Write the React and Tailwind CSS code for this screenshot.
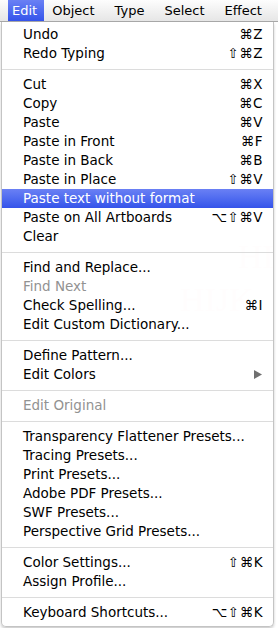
import React from "react";

const groups = [
  [
    { label: "Undo", keys: "⌘Z" },
    { label: "Redo Typing", keys: "⇧⌘Z" },
  ],
  [
    { label: "Cut", keys: "⌘X" },
    { label: "Copy", keys: "⌘C" },
    { label: "Paste", keys: "⌘V" },
    { label: "Paste in Front", keys: "⌘F" },
    { label: "Paste in Back", keys: "⌘B" },
    { label: "Paste in Place", keys: "⇧⌘V" },
    { label: "Paste text without format", active: true },
    { label: "Paste on All Artboards", keys: "⌥⇧⌘V" },
    { label: "Clear" },
  ],
  [
    { label: "Find and Replace..." },
    { label: "Find Next", disabled: true },
    { label: "Check Spelling...", keys: "⌘I" },
    { label: "Edit Custom Dictionary..." },
  ],
  [
    { label: "Define Pattern..." },
    { label: "Edit Colors", submenu: true },
  ],
  [{ label: "Edit Original", disabled: true }],
  [
    { label: "Transparency Flattener Presets..." },
    { label: "Tracing Presets..." },
    { label: "Print Presets..." },
    { label: "Adobe PDF Presets..." },
    { label: "SWF Presets..." },
    { label: "Perspective Grid Presets..." },
  ],
  [
    { label: "Color Settings...", keys: "⇧⌘K" },
    { label: "Assign Profile..." },
  ],
  [{ label: "Keyboard Shortcuts...", keys: "⌥⇧⌘K" }],
];

const topMenus = ["Object", "Type", "Select", "Effect"];

function MenuRow({ item }) {
  const text = item.active
    ? "text-white"
    : item.disabled
    ? "text-[#929292]"
    : "text-black";
  return (
    <div
      className={`flex items-center justify-between h-[19px] pl-[21px] pr-[10px] ${text} ${
        item.active ? "bg-gradient-to-b from-[#6a80f4] to-[#3553ea]" : ""
      }`}
    >
      <span>{item.label}</span>
      {item.keys && <span className="tracking-[0.5px]">{item.keys}</span>}
      {item.submenu && (
        <svg width="8" height="9" viewBox="0 0 8 9" className="mr-[1px]">
          <path d="M0 0 L8 4.5 L0 9 Z" fill="#707070" />
        </svg>
      )}
    </div>
  );
}

export default function App() {
  return (
    <div className="relative w-[278px] h-[628px] bg-white overflow-hidden font-['Lucida_Grande','DejaVu_Sans',sans-serif]">
      {/* menu bar */}
      <div className="flex h-[22px] items-stretch border-b border-[#a8a8a8] bg-gradient-to-b from-[#fdfdfd] to-[#e6e6e6] text-[13px] text-black">
        <div className="ml-[8px] flex items-center pl-[4px] pr-[7px] bg-gradient-to-b from-[#6a80f4] to-[#3553ea] text-white">
          Edit
        </div>
        {topMenus.map((m, i) => (
          <div
            key={m}
            className={`flex items-center pr-[10px] ${i === 0 ? "pl-[8px]" : "pl-[10px]"}`}
          >
            {m}
          </div>
        ))}
      </div>

      {/* faint document content behind the translucent menu */}
      <div className="absolute left-[238px] top-[240px] text-[34px] font-['Liberation_Serif',serif] text-[#fce8ec] leading-none">
        HI
      </div>
      <div className="absolute left-[180px] top-[283px] text-[34px] font-['Liberation_Serif',serif] text-[#fce8ec] leading-none">
        HIJK
      </div>

      {/* dropdown */}
      <div className="relative ml-px w-[273px] bg-white/90 border-x border-b border-[#c4c4c4] rounded-b-[5px] pt-[3px] pb-[4px] text-[13.5px] shadow-[0_2px_3px_rgba(0,0,0,0.2)]">
        {groups.map((g, gi) => (
          <div key={gi}>
            {gi > 0 && (
              <div className="h-[12px] flex items-center">
                <div className="h-px w-full bg-[#dcdcdc]" />
              </div>
            )}
            {g.map((item) => (
              <MenuRow key={item.label} item={item} />
            ))}
          </div>
        ))}
      </div>
    </div>
  );
}
